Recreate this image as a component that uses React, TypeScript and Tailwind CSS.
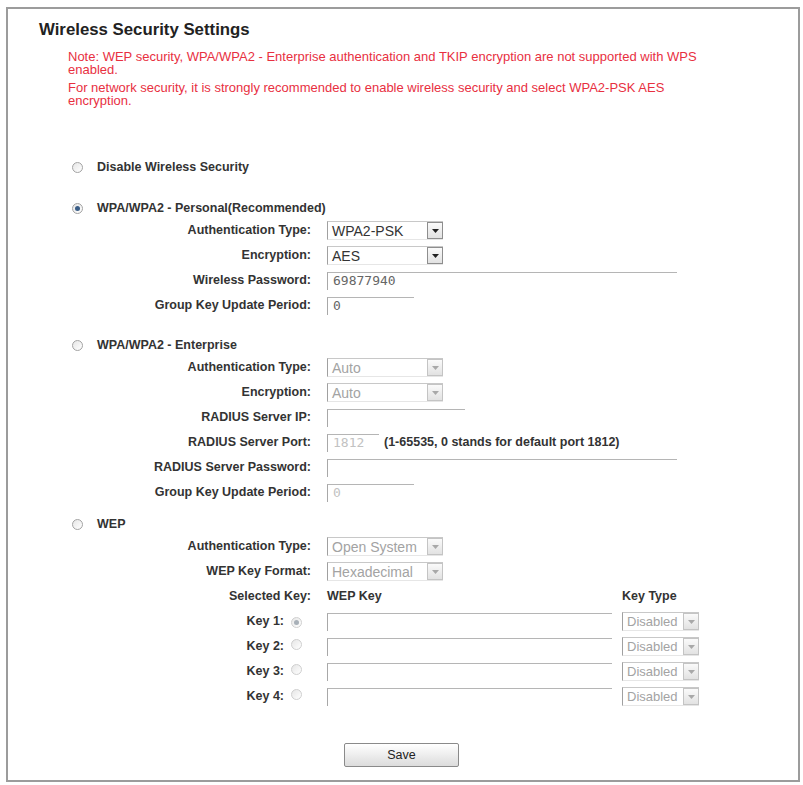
import { ReactNode } from "react";

const FONT = "font-['Liberation_Sans',Arial,sans-serif]";

function Radio({ checked = false, disabled = false }: { checked?: boolean; disabled?: boolean }) {
  return (
    <span
      className={`inline-flex h-[11px] w-[11px] shrink-0 items-center justify-center rounded-full border bg-gradient-to-br from-[#e6e6e6] to-white ${
        disabled ? "border-[#cfcfcf]" : "border-[#a3a3a3]"
      }`}
    >
      {checked && (
        <span className={`h-[5px] w-[5px] rounded-full ${disabled ? "bg-[#a8b0b8]" : "bg-[#3a5d86]"}`} />
      )}
    </span>
  );
}

function Select({
  value,
  width = 116,
  disabled = false,
  size = "text-[14px]",
}: {
  value: string;
  width?: number;
  disabled?: boolean;
  size?: string;
}) {
  return (
    <div
      className="flex h-[19px] items-center border-t border-l border-b border-t-[#c8c8c8] border-l-[#a0a0a0] border-b-[#e6e6e6]"
      style={{ width }}
    >
      <span className={`flex-1 pl-[4px] leading-none ${size} ${disabled ? "text-[#a3a3a3]" : "text-[#333]"}`}>
        {value}
      </span>
      <span
        className={`flex h-[17px] w-[16px] items-center justify-center border bg-gradient-to-b from-[#fafafa] to-[#e2e2e2] ${
          disabled ? "border-[#c4c4c4]" : "border-[#8e8e8e]"
        }`}
      >
        <svg width="7" height="4" viewBox="0 0 7 4">
          <path d="M0 0h7L3.5 4z" fill={disabled ? "#a8a8a8" : "#222"} />
        </svg>
      </span>
    </div>
  );
}

function Input({ width, value, disabled = false }: { width: number; value?: string; disabled?: boolean }) {
  return (
    <div
      className={`flex h-[18px] items-center border-t border-l border-t-[#b5b5b5] border-l-[#a8a8a8] pl-[5px] font-['DejaVu_Sans_Mono',monospace] text-[13px] ${
        disabled ? "text-[#c2c2c2]" : "text-[#666]"
      }`}
      style={{ width }}
    >
      {value}
    </div>
  );
}

function Field({ label, children }: { label: ReactNode; children: ReactNode }) {
  return (
    <div className="flex h-[25px] items-center">
      <div className="flex w-[303px] items-center justify-end text-[12.5px] font-bold text-[#333]">{label}</div>
      <div className="ml-[16px] flex items-center">{children}</div>
    </div>
  );
}

function Option({ label, checked, className }: { label: string; checked?: boolean; className?: string }) {
  return (
    <div className={`flex h-[20px] items-center pl-[64px] ${className ?? ""}`}>
      <Radio checked={checked} />
      <span className="ml-[14px] text-[12.5px] font-bold text-[#333]">{label}</span>
    </div>
  );
}

function KeyRow({ n, checked }: { n: number; checked?: boolean }) {
  return (
    <Field
      label={
        <>
          <span>Key {n}:</span>
          <span className="ml-[7px] mr-[9px]">
            <Radio checked={checked} disabled />
          </span>
        </>
      }
    >
      <Input width={285} disabled />
      <div className="ml-[10px]">
        <Select value="Disabled" width={77} disabled size="text-[13px]" />
      </div>
    </Field>
  );
}

export default function App() {
  return (
    <div className={`h-[785px] w-[803px] bg-white pt-[7px] pl-[6px] ${FONT}`}>
      <div className="h-[775px] w-[794px] border-2 border-[#9c9c9c]">
        <h1 className="ml-[31px] mt-[11px] text-[16.8px] font-bold leading-[20px] text-[#222]">
          Wireless Security Settings
        </h1>

        <div className="ml-[60px] mt-[10px] w-[650px] text-[13px] leading-[13px] text-[#e8303f]">
          <p>
            Note: WEP security, WPA/WPA2 - Enterprise authentication and TKIP encryption are not supported with WPS
            enabled.
          </p>
          <p className="mt-[5px]">
            For network security, it is strongly recommended to enable wireless security and select WPA2-PSK AES
            encryption.
          </p>
        </div>

        <Option label="Disable Wireless Security" className="mt-[50px]" />

        <Option label="WPA/WPA2 - Personal(Recommended)" checked className="mt-[21px] h-[18px]" />
        <Field label="Authentication Type:">
          <Select value="WPA2-PSK" />
        </Field>
        <Field label="Encryption:">
          <Select value="AES" />
        </Field>
        <Field label="Wireless Password:">
          <Input width={350} value="69877940" />
        </Field>
        <Field label="Group Key Update Period:">
          <Input width={87} value="0" />
        </Field>

        <Option label="WPA/WPA2 - Enterprise" className="mt-[17px]" />
        <Field label="Authentication Type:">
          <Select value="Auto" disabled />
        </Field>
        <Field label="Encryption:">
          <Select value="Auto" disabled />
        </Field>
        <Field label="RADIUS Server IP:">
          <Input width={138} />
        </Field>
        <Field label="RADIUS Server Port:">
          <Input width={52} value="1812" disabled />
          <span className="ml-[5px] text-[12.5px] font-bold text-[#333]">
            (1-65535, 0 stands for default port 1812)
          </span>
        </Field>
        <Field label="RADIUS Server Password:">
          <Input width={350} />
        </Field>
        <Field label="Group Key Update Period:">
          <Input width={87} value="0" disabled />
        </Field>

        <Option label="WEP" className="mt-[9px]" />
        <Field label="Authentication Type:">
          <Select value="Open System" disabled />
        </Field>
        <Field label="WEP Key Format:">
          <Select value="Hexadecimal" disabled />
        </Field>
        <Field label="Selected Key:">
          <span className="w-[295px] text-[12.5px] font-bold text-[#333]">WEP Key</span>
          <span className="text-[12.5px] font-bold text-[#333]">Key Type</span>
        </Field>
        <KeyRow n={1} checked />
        <KeyRow n={2} />
        <KeyRow n={3} />
        <KeyRow n={4} />

        <div className="mt-[34px] flex pl-[336px]">
          <button className="h-[24px] w-[115px] rounded-[2px] border border-[#8a8a8a] bg-gradient-to-b from-white to-[#dcdcdc] text-[12.5px] text-[#222]">
            Save
          </button>
        </div>
      </div>
    </div>
  );
}
